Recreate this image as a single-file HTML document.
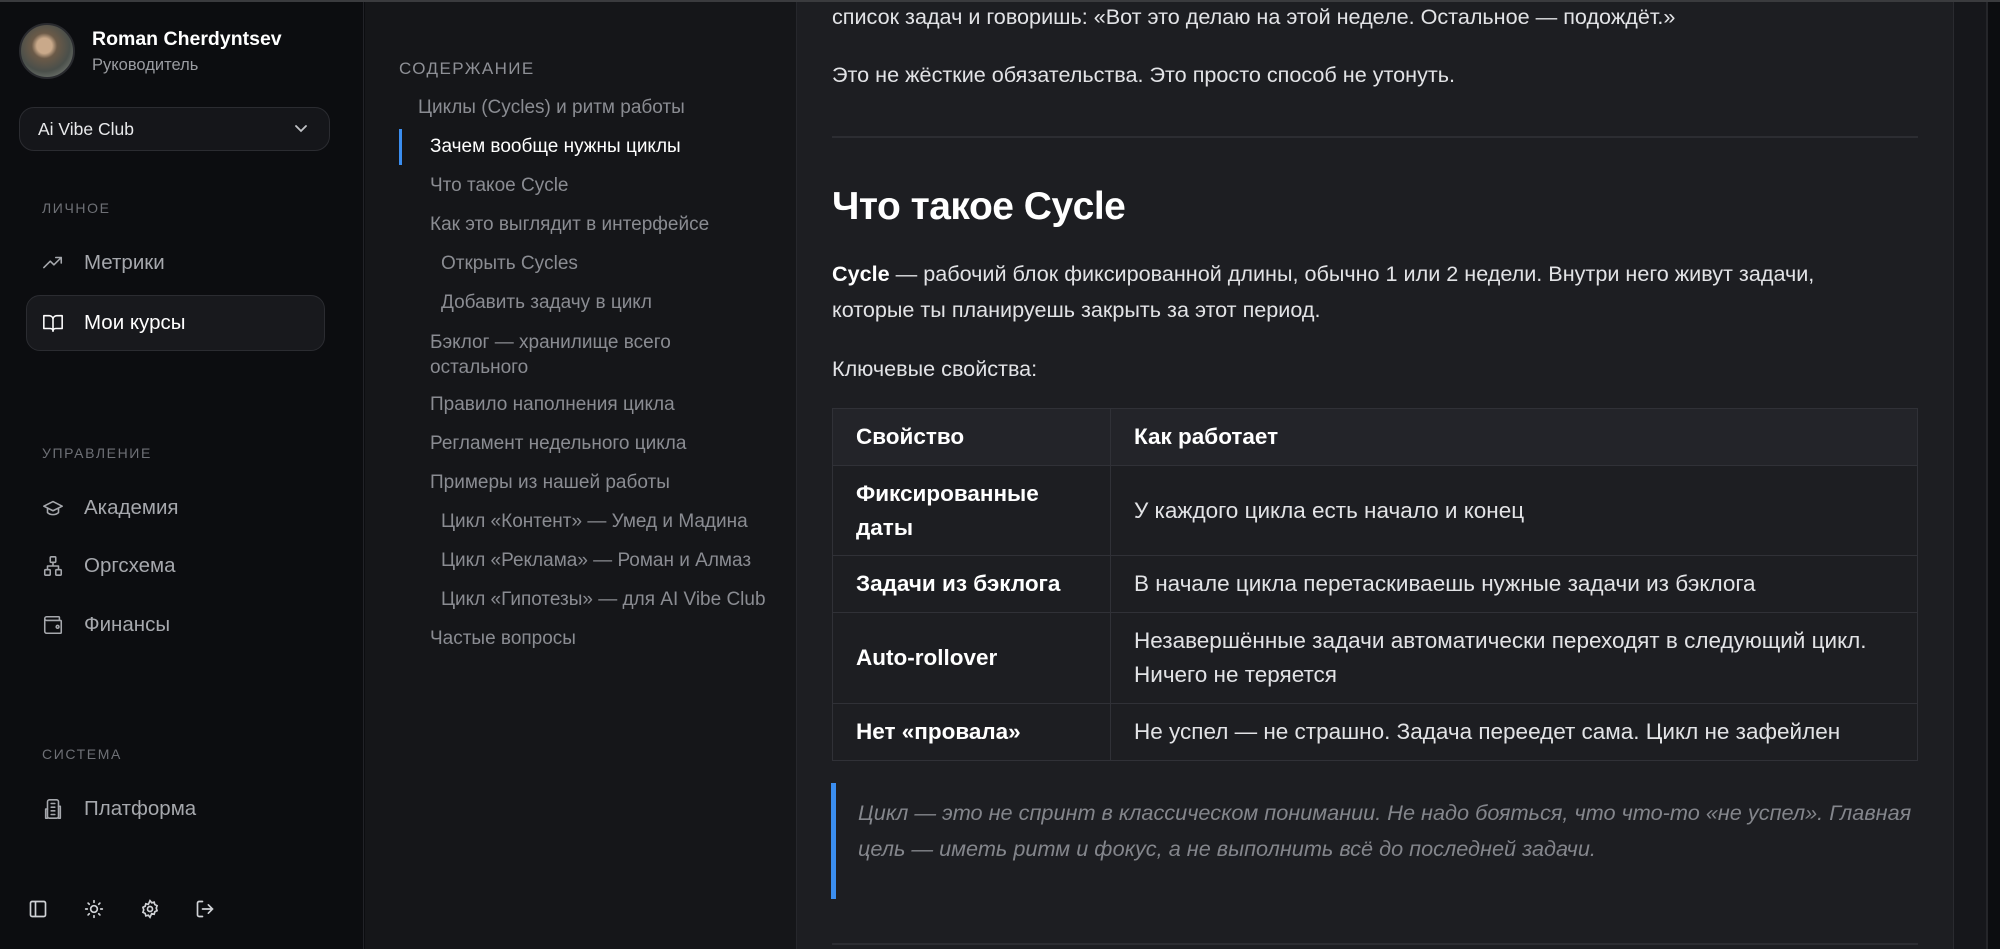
<!DOCTYPE html>
<html><head><meta charset="utf-8"><style>
*{margin:0;padding:0;box-sizing:border-box}
body{width:2000px;height:949px;overflow:hidden;background:#0c0d10;font-family:"Liberation Sans",sans-serif;position:relative}
.abs{position:absolute}
#top{left:0;top:0;width:2000px;height:2px;background:#3a3b3e}
#side{left:0;top:2px;width:364px;height:947px;background:#0c0d10;border-right:1px solid #222328}
#toc{left:365px;top:2px;width:432px;height:947px;background:#151619;border-right:1px solid #26272c}
#main{left:797px;top:2px;width:1157px;height:947px;background:#1d1e22;border-right:1px solid #2a2b30;overflow:hidden}
#strip{left:1954px;top:2px;width:34px;height:947px;background:#16171b;border-right:2px solid #25262a}
.lbl{color:#6e7076;font-size:14px;letter-spacing:1.6px}
.nav{color:#a6a8ad;font-size:20.5px;display:flex;align-items:center}
.nav svg{width:22px;height:22px;margin-right:20px;stroke:#a6a8ad;fill:none;stroke-width:1.7;stroke-linecap:round;stroke-linejoin:round}
.t{color:#8a8c92;font-size:19px}
p.c{color:#e2e3e6;font-size:21.6px;line-height:36px}
table{border-collapse:collapse;width:1086px;font-size:22.5px;color:#e2e3e6}
td{border:1px solid #303137;padding:0 23px;line-height:34px}
td b{color:#fff}
</style></head><body>
<div id="top" class="abs"></div>
<div id="side" class="abs"></div>
<div id="toc" class="abs"></div>
<div id="main" class="abs"></div>
<div id="strip" class="abs"></div>

<!-- sidebar -->
<div class="abs" style="left:19px;top:23px;width:56px;height:56px;border-radius:50%;background:radial-gradient(circle at 45% 40%,#c9a98a 0 18%,#6b5a48 30%,#4a4f4a 60%,#8a8f88 100%);border:2px solid #2a2b2f"></div>
<div class="abs" style="left:92px;top:28px;color:#fff;font-size:19.5px;font-weight:bold">Roman Cherdyntsev</div>
<div class="abs" style="left:92px;top:56px;color:#9a9ca1;font-size:16.5px">Руководитель</div>
<div class="abs" style="left:19px;top:107px;width:311px;height:44px;border:1px solid #2b2c31;border-radius:15px;background:#15161a"></div>
<div class="abs" style="left:38px;top:119px;color:#e8e9eb;font-size:17.5px">Ai Vibe Club</div>
<svg class="abs" style="left:293px;top:122px" width="16" height="14" viewBox="0 0 16 14"><path d="M3 4l5 5 5-5" stroke="#c0c2c6" stroke-width="1.8" fill="none" stroke-linecap="round"/></svg>

<div class="abs lbl" style="left:42px;top:200px">ЛИЧНОЕ</div>
<div class="abs nav" style="left:42px;top:251px"><svg viewBox="0 0 24 24"><path d="M2 17l7-7 4 4 8-8M15 6h6v6"/></svg>Метрики</div>
<div class="abs" style="left:26px;top:295px;width:299px;height:56px;border:1px solid #2b2c31;border-radius:14px;background:#18191d"></div>
<div class="abs nav" style="left:42px;top:311px;color:#fff"><svg viewBox="0 0 24 24" style="stroke:#fff"><path d="M2 4h6a4 4 0 014 4v13a3 3 0 00-3-3H2zM22 4h-6a4 4 0 00-4 4v13a3 3 0 013-3h7z"/></svg>Мои курсы</div>

<div class="abs lbl" style="left:42px;top:445px">УПРАВЛЕНИЕ</div>
<div class="abs nav" style="left:42px;top:496px"><svg viewBox="0 0 24 24"><path d="M22 10L12 5 2 10l10 5 10-5zM6 12v5c3 3 9 3 12 0v-5"/></svg>Академия</div>
<div class="abs nav" style="left:42px;top:554px"><svg viewBox="0 0 24 24"><rect x="9" y="2" width="6" height="6" rx="1"/><rect x="3" y="16" width="6" height="6" rx="1"/><rect x="15" y="16" width="6" height="6" rx="1"/><path d="M6 16v-4h12v4M12 8v4"/></svg>Оргсхема</div>
<div class="abs nav" style="left:42px;top:613px"><svg viewBox="0 0 24 24"><path d="M19 7V4a1 1 0 00-1-1H5a2 2 0 000 4h15a1 1 0 011 1v12a1 1 0 01-1 1H5a2 2 0 01-2-2V5"/><circle cx="17" cy="14" r="1.5"/></svg>Финансы</div>

<div class="abs lbl" style="left:42px;top:746px">СИСТЕМА</div>
<div class="abs nav" style="left:42px;top:797px"><svg viewBox="0 0 24 24"><rect x="6" y="2" width="12" height="20" rx="2"/><path d="M6 12H4v10h2M18 9h2v13h-2M10 6h4M10 10h4M10 14h4M10 18h4"/></svg>Платформа</div>

<svg class="abs" style="left:28px;top:899px" width="20" height="20" viewBox="0 0 24 24" fill="none" stroke="#d0d2d6" stroke-width="2"><rect x="3" y="3" width="18" height="18" rx="2"/><path d="M9 3v18"/></svg>
<svg class="abs" style="left:84px;top:899px" width="20" height="20" viewBox="0 0 24 24" fill="none" stroke="#d0d2d6" stroke-width="2" stroke-linecap="round"><circle cx="12" cy="12" r="4"/><path d="M12 2v2M12 20v2M4.9 4.9l1.4 1.4M17.7 17.7l1.4 1.4M2 12h2M20 12h2M4.9 19.1l1.4-1.4M17.7 6.3l1.4-1.4"/></svg>
<svg class="abs" style="left:140px;top:899px" width="20" height="20" viewBox="0 0 24 24" fill="none" stroke="#d0d2d6" stroke-width="2"><circle cx="12" cy="12" r="3"/><path d="M12 2l2 2.5 3-.8.8 3L20.5 8l-1 3 1 3-2.7 1.3-.8 3-3-.8L12 22l-2-2.5-3 .8-.8-3L3.5 16l1-3-1-3 2.7-1.3.8-3 3 .8z"/></svg>
<svg class="abs" style="left:195px;top:899px" width="20" height="20" viewBox="0 0 24 24" fill="none" stroke="#d0d2d6" stroke-width="2" stroke-linecap="round"><path d="M9 21H5a2 2 0 01-2-2V5a2 2 0 012-2h4M16 17l5-5-5-5M21 12H9"/></svg>

<!-- toc -->
<div class="abs" style="left:399px;top:59px;color:#8e9096;font-size:17px;letter-spacing:1.4px">СОДЕРЖАНИЕ</div>
<div class="abs" style="left:399px;top:129px;width:3px;height:36px;background:#3b8ef0"></div>
<div class="abs t" style="left:418px;top:97px">Циклы (Cycles) и ритм работы</div>
<div class="abs t" style="left:430px;top:136px;color:#fff">Зачем вообще нужны циклы</div>
<div class="abs t" style="left:430px;top:175px">Что такое Cycle</div>
<div class="abs t" style="left:430px;top:214px">Как это выглядит в интерфейсе</div>
<div class="abs t" style="left:441px;top:253px">Открыть Cycles</div>
<div class="abs t" style="left:441px;top:292px">Добавить задачу в цикл</div>
<div class="abs t" style="left:430px;top:330px;line-height:25px">Бэклог — хранилище всего<br>остального</div>
<div class="abs t" style="left:430px;top:394px">Правило наполнения цикла</div>
<div class="abs t" style="left:430px;top:433px">Регламент недельного цикла</div>
<div class="abs t" style="left:430px;top:472px">Примеры из нашей работы</div>
<div class="abs t" style="left:441px;top:511px">Цикл «Контент» — Умед и Мадина</div>
<div class="abs t" style="left:441px;top:550px">Цикл «Реклама» — Роман и Алмаз</div>
<div class="abs t" style="left:441px;top:589px">Цикл «Гипотезы» — для AI Vibe Club</div>
<div class="abs t" style="left:430px;top:628px">Частые вопросы</div>

<!-- content -->
<p class="abs c" style="left:832px;top:-1px">список задач и говоришь: «Вот это делаю на этой неделе. Остальное — подождёт.»</p>
<p class="abs c" style="left:832px;top:57px">Это не жёсткие обязательства. Это просто способ не утонуть.</p>
<div class="abs" style="left:832px;top:136px;width:1086px;height:2px;background:#2c2d32"></div>
<div class="abs" style="left:832px;top:185px;color:#fff;font-size:39px;font-weight:bold;letter-spacing:-0.5px">Что такое Cycle</div>
<p class="abs c" style="left:832px;top:256px"><b style="color:#fff">Cycle</b> — рабочий блок фиксированной длины, обычно 1 или 2 недели. Внутри него живут задачи,<br>которые ты планируешь закрыть за этот период.</p>
<p class="abs c" style="left:832px;top:351px">Ключевые свойства:</p>
<table class="abs" style="left:832px;top:408px">
<tr style="height:57px;background:#232429"><td style="width:278px"><b>Свойство</b></td><td><b>Как работает</b></td></tr>
<tr style="height:90px"><td><b>Фиксированные<br>даты</b></td><td>У каждого цикла есть начало и конец</td></tr>
<tr style="height:57px"><td><b>Задачи из бэклога</b></td><td>В начале цикла перетаскиваешь нужные задачи из бэклога</td></tr>
<tr style="height:91px"><td><b>Auto-rollover</b></td><td>Незавершённые задачи автоматически переходят в следующий цикл.<br>Ничего не теряется</td></tr>
<tr style="height:57px"><td><b>Нет «провала»</b></td><td>Не успел — не страшно. Задача переедет сама. Цикл не зафейлен</td></tr>
</table>
<div class="abs" style="left:831px;top:783px;width:5px;height:116px;background:#3b8ef0"></div>
<p class="abs" style="left:858px;top:795px;color:#84868c;font-size:21.7px;line-height:36px;font-style:italic">Цикл — это не спринт в классическом понимании. Не надо бояться, что что-то «не успел». Главная<br>цель — иметь ритм и фокус, а не выполнить всё до последней задачи.</p>
<div class="abs" style="left:832px;top:943px;width:1086px;height:2px;background:#2c2d32"></div>
</body></html>
